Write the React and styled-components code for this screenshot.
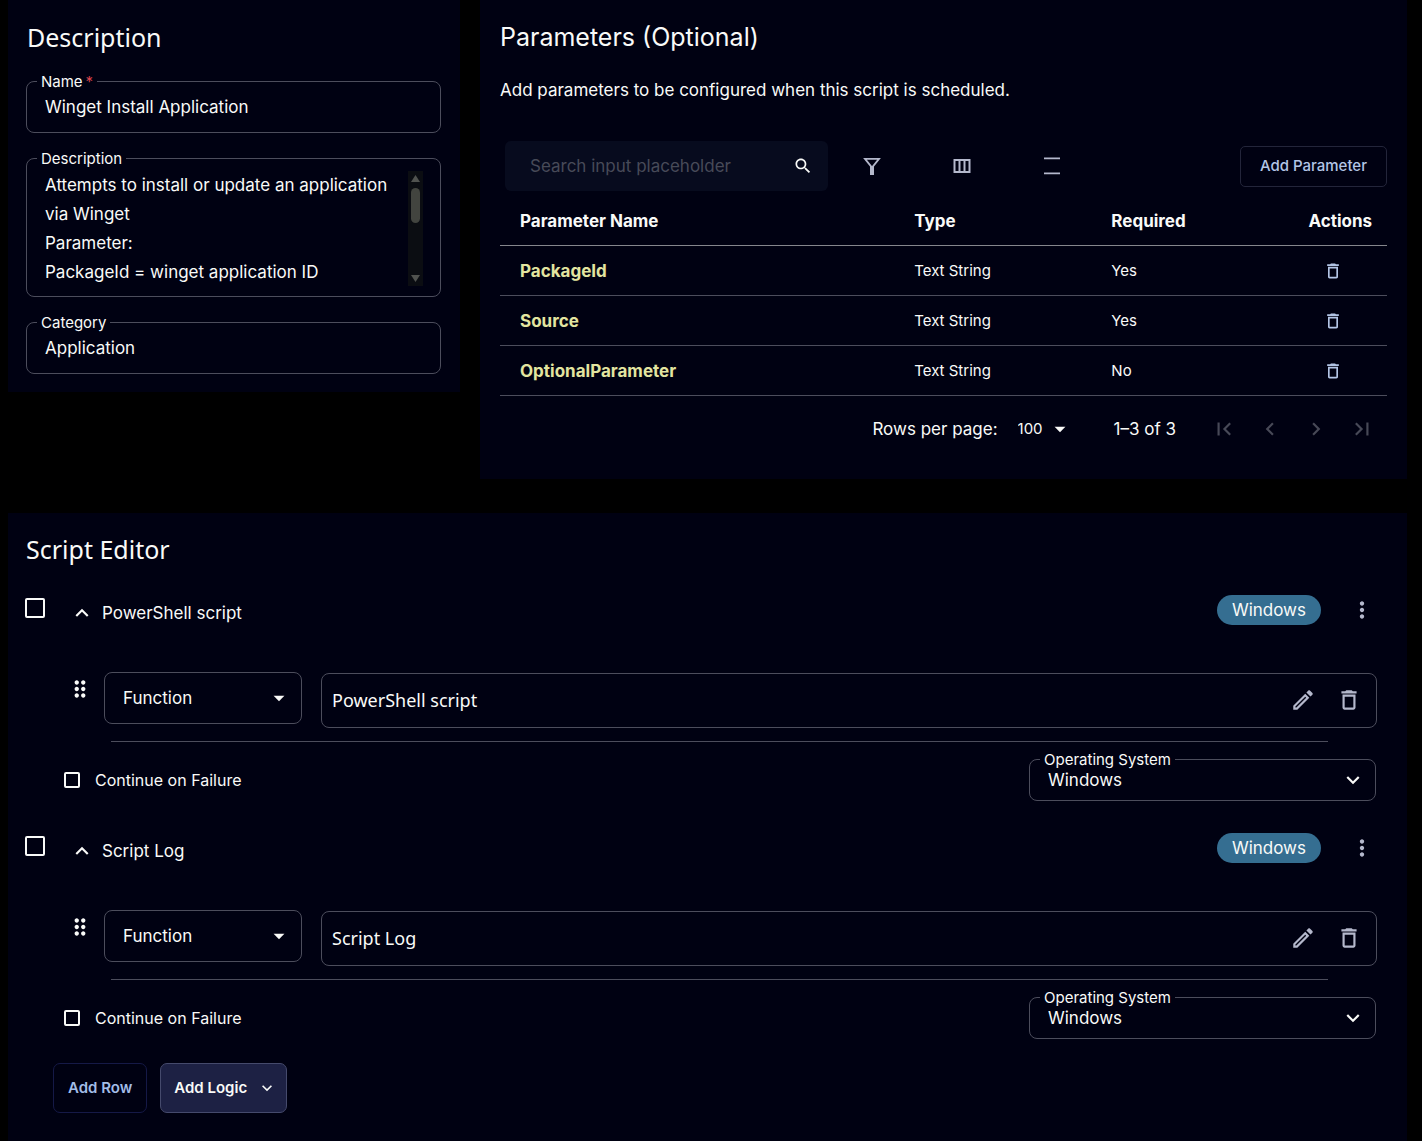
import React from "react";
import styled, { createGlobalStyle } from "styled-components";

const color = {
  page: "#000000",
  panel: "#000112",
  outline: "#4c4d5c",
  faint: "#23253a",
  text: "#f9faf8",
  accent: "#b3c5e6",
  icon: "#b4b8cc",
};

const GlobalStyle = createGlobalStyle`
  * { box-sizing: border-box; }
  body {
    margin: 0;
    background: ${color.page};
    color: ${color.text};
    font-family: Inter, "Liberation Sans", sans-serif;
    font-size: 17px;
    line-height: 24px;
  }
  button, input, select, textarea { font: inherit; color: inherit; margin: 0; }
`;

const Page = styled.main`
  display: grid;
  gap: 34px;
  padding: 0 15px 0 8px;
`;

const TopRow = styled.div`
  display: grid;
  grid-template-columns: 452px minmax(0, 1fr);
  align-items: start;
  gap: 20px;
`;

const Panel = styled.section`
  background: ${color.panel};
  padding: ${(p) => p.$pad};
`;

const Heading = styled.h2`
  margin: 0;
  padding-left: ${(p) => (p.$noto ? "1px" : "0")};
  font-family: ${(p) => (p.$noto ? '"Noto Sans", sans-serif' : "inherit")};
  font-size: 25px;
  line-height: 34px;
  font-weight: 400;
`;

const FieldStack = styled.div`
  display: grid;
  gap: 25px;
  margin-top: 27px;
`;

const Field = styled.div`
  position: relative;
  display: flex;
  height: ${(p) => p.$height || "52px"};
  border: 1px solid ${color.outline};
  border-radius: 8px;
`;

const FieldLabel = styled.label`
  position: absolute;
  top: -10px;
  left: 10px;
  padding: 0 4px;
  background: ${color.panel};
  font-size: 15px;
  line-height: 20px;
`;

const Star = styled.span`
  margin-left: 3px;
  color: #d8434b;
`;

const FieldInput = styled.input`
  width: 100%;
  padding: 0 18px;
  border: 0;
  outline: 0;
  background: none;
`;

const FieldArea = styled.textarea`
  flex: 1;
  min-width: 0;
  height: 116px;
  margin-top: 12px;
  padding: 0 0 0 18px;
  border: 0;
  outline: 0;
  resize: none;
  overflow: hidden;
  background: none;
  line-height: 29px;
`;

const ScrollTrack = styled.div`
  display: flex;
  flex-direction: column;
  align-items: center;
  justify-content: space-between;
  width: 15px;
  height: 115px;
  margin: 12px 17px 0 8px;
  padding: 4px 0;
  background: #0b0d12;
`;

const ScrollThumb = styled.div`
  width: 9px;
  height: 35px;
  margin: 0 0 46px;
  border-radius: 5px;
  background: #42443f;
`;

const Lead = styled.p`
  margin: 24px 0 0;
`;

const Toolbar = styled.div`
  display: flex;
  align-items: center;
  margin: 39px 0 0 5px;
`;

const SearchBox = styled.div`
  display: flex;
  align-items: center;
  width: 323px;
  height: 50px;
  padding: 0 15px 0 25px;
  border-radius: 6px;
  background: #070b1e;
`;

const SearchInput = styled.input`
  flex: 1;
  min-width: 0;
  padding: 0;
  border: 0;
  outline: 0;
  background: none;
  &::placeholder { color: #474a58; opacity: 1; }
`;

const ToolGroup = styled.div`
  display: flex;
  gap: 50px;
  margin-left: 24px;
`;

const IconButton = styled.button`
  display: inline-flex;
  align-items: center;
  justify-content: center;
  width: ${(p) => p.$size || "40px"};
  height: 40px;
  padding: 0;
  border: 0;
  background: none;
  color: ${(p) => p.$tone || color.icon};
`;

const AddParameter = styled.button`
  height: 41px;
  margin-left: auto;
  padding: 0 19px;
  border: 1px solid ${color.faint};
  border-radius: 5px;
  background: none;
  color: ${color.accent};
  font-size: 15px;
  font-weight: 500;
`;

const Table = styled.table`
  width: 100%;
  margin-top: 4px;
  border-collapse: collapse;
  table-layout: fixed;
`;

const Col = styled.col`
  width: calc(100% * ${(p) => p.$share} / 9);
`;

const HeadCell = styled.th`
  height: 50px;
  padding: 2px 0 0 20px;
  border-bottom: 1px solid #85868c;
  text-align: left;
  font-size: 17px;
  font-weight: 700;
`;

const Cell = styled.td`
  height: 50px;
  padding: 2px 0 0 20px;
  border-bottom: 1px solid ${color.outline};
  font-size: ${(p) => (p.$name ? "17px" : "15px")};
  font-weight: ${(p) => (p.$name ? 700 : 400)};
  color: ${(p) => (p.$name ? "#e3e5a0" : "inherit")};
`;

const Pager = styled.div`
  display: flex;
  align-items: center;
  justify-content: flex-end;
  height: 40px;
  margin-top: 13px;
`;

const PageSize = styled.div`
  position: relative;
  margin: 0 41px 0 20px;
  font-size: 15px;
`;

const PlainSelect = styled.select`
  appearance: none;
  width: ${(p) => p.$width || "100%"};
  height: 100%;
  padding: ${(p) => p.$pad || "0 18px"};
  border: 0;
  outline: 0;
  border-radius: 8px;
  background: none;
`;

const SelectIcon = styled.span`
  position: absolute;
  top: 0;
  bottom: 0;
  right: ${(p) => p.$right || "0"};
  display: flex;
  align-items: center;
  pointer-events: none;
`;

const PagerButtons = styled.div`
  display: flex;
  gap: 6px;
  margin-left: 28px;
  margin-right: 5px;
`;

const Blocks = styled.div`
  margin-top: 29px;
`;

const Block = styled.article`
  display: grid;
  grid-template-columns: 36px minmax(0, 1fr);
  height: 238px;
`;

const Select = styled.div`
  padding-top: 3px;
`;

const Checkbox = styled.input`
  appearance: none;
  display: block;
  flex: none;
  width: ${(p) => p.$size};
  height: ${(p) => p.$size};
  border: 2px solid ${color.text};
  border-radius: 2px;
  background: none;
  &:checked { background: ${color.text}; }
`;

const BlockHeader = styled.header`
  display: flex;
  align-items: center;
  height: 30px;
  padding-right: 5px;
`;

const Toggle = styled.button`
  display: flex;
  align-items: center;
  gap: 7px;
  padding: 6px 0 0 8px;
  border: 0;
  background: none;
`;

const Chip = styled.span`
  margin: 0 21px 0 auto;
  padding: 0 15px;
  border-radius: 15px;
  background: #356e91;
  line-height: 30px;
`;

const FunctionRow = styled.div`
  display: flex;
  align-items: flex-start;
  margin-top: 47px;
  padding-right: 10px;
`;

const Handle = styled.button`
  display: flex;
  justify-content: center;
  width: 26px;
  margin: 4px 11px 0 6px;
  padding: 0;
  border: 0;
  background: none;
`;

const FunctionSelect = styled(Field)`
  width: 198px;
`;

const ScriptBox = styled.div`
  flex: 1;
  display: flex;
  align-items: center;
  height: 55px;
  margin: 1px 0 0 19px;
  padding: 0 4px 0 10px;
  border: 1px solid ${color.outline};
  border-radius: 8px;
`;

const ScriptInput = styled.input`
  flex: 1;
  min-width: 0;
  padding: 0;
  border: 0;
  outline: 0;
  background: none;
  font-family: "Noto Sans", sans-serif;
  font-size: 18px;
`;

const Rule = styled.hr`
  margin: 13px 59px 0 50px;
  border: 0;
  border-top: 1px solid ${color.outline};
`;

const OptionsRow = styled.div`
  display: flex;
  align-items: center;
  justify-content: space-between;
  margin-top: 17px;
  padding: 0 11px 0 3px;
`;

const CheckLabel = styled.label`
  display: flex;
  align-items: center;
  gap: 15px;
  font-size: 16px;
`;

const SystemField = styled(Field)`
  width: 347px;
`;

const Actions = styled.div`
  display: flex;
  gap: 13px;
  padding-left: 28px;
  margin-top: -8px;
`;

const ActionButton = styled.button`
  display: flex;
  align-items: center;
  gap: 10px;
  height: 50px;
  padding: ${(p) => (p.$filled ? "0 9px 0 13px" : "0 14px")};
  border: 1px solid ${(p) => (p.$filled ? "#454a6c" : "#151947")};
  border-radius: 7px;
  background: ${(p) => (p.$filled ? "#1d2144" : "none")};
  color: ${(p) => (p.$filled ? color.text : "#a3bde8")};
  font-size: 15px;
  font-weight: 600;
`;

const Icon = ({ d, size = 26, children }) => (
  <svg width={size} height={size} viewBox="0 0 24 24" fill="currentColor" aria-hidden="true">
    {d && <path d={d} />}
    {children}
  </svg>
);

const paths = {
  search:
    "M15.5 14h-.79l-.28-.27C15.41 12.59 16 11.11 16 9.5 16 5.91 13.09 3 9.5 3S3 5.91 3 9.5 5.91 16 9.5 16c1.61 0 3.09-.59 4.23-1.57l.27.28v.79l5 4.99L20.49 19l-4.99-5zm-6 0C7.01 14 5 11.99 5 9.5S7.01 5 9.5 5 14 7.01 14 9.5 11.99 14 9.5 14z",
  trash:
    "M6 19c0 1.1.9 2 2 2h8c1.1 0 2-.9 2-2V7H6v12zM8 9h8v10H8V9zm7.5-5l-1-1h-5l-1 1H5v2h14V4z",
  edit:
    "M14.06 9.02l.92.92L5.92 19H5v-.92l9.06-9.06M17.66 3c-.25 0-.51.1-.7.29l-1.83 1.83 3.75 3.75 1.83-1.83c.39-.39.39-1.02 0-1.41l-2.34-2.34c-.2-.2-.45-.29-.71-.29zm-3.6 3.19L3 17.25V21h3.75L17.81 9.94l-3.75-3.75z",
  caret: "M7 10l5 5 5-5z",
  up: "M12 8l-6 6 1.41 1.41L12 10.83l4.59 4.58L18 14z",
  down: "M16.59 8.59L12 13.17 7.41 8.59 6 10l6 6 6-6z",
  left: "M15.41 7.41L14 6l-6 6 6 6 1.41-1.41L10.83 12z",
  right: "M10 6L8.59 7.41 13.17 12l-4.58 4.59L10 18l6-6z",
  first: "M18.41 16.59L13.82 12l4.59-4.59L17 6l-6 6 6 6zM6 6h2v12H6z",
  last: "M5.59 7.41L10.18 12l-4.59 4.59L7 18l6-6-6-6zM16 6h2v12h-2z",
  more: "M12 8c1.1 0 2-.9 2-2s-.9-2-2-2-2 .9-2 2 .9 2 2 2zm0 2c-1.1 0-2 .9-2 2s.9 2 2 2 2-.9 2-2-.9-2-2-2zm0 6c-1.1 0-2 .9-2 2s.9 2 2 2 2-.9 2-2-.9-2-2-2z",
  drag: "M11 18c0 1.1-.9 2-2 2s-2-.9-2-2 .9-2 2-2 2 .9 2 2zm-2-8c-1.1 0-2 .9-2 2s.9 2 2 2 2-.9 2-2-.9-2-2-2zm0-6c-1.1 0-2 .9-2 2s.9 2 2 2 2-.9 2-2-.9-2-2-2zm6 4c1.1 0 2-.9 2-2s-.9-2-2-2-2 .9-2 2 .9 2 2 2zm0 2c-1.1 0-2 .9-2 2s.9 2 2 2 2-.9 2-2-.9-2-2-2zm0 6c-1.1 0-2 .9-2 2s.9 2 2 2 2-.9 2-2-.9-2-2-2z",
};

const FilterIcon = () => (
  <Icon size={24}>
    <path d="M5 4.9h14l-7 8.6z" fill="none" stroke="currentColor" strokeWidth="1.8" />
    <path d="M10 12h4v9h-4z" />
  </Icon>
);

const ColumnsIcon = () => (
  <Icon size={24}>
    <path d="M4.5 6h15v12h-15zM9.5 6v12M14.5 6v12" fill="none" stroke="currentColor" strokeWidth="2" />
  </Icon>
);

const DensityIcon = () => (
  <Icon size={24}>
    <path d="M4 3.5h16v1.7H4zM4 18.5h16v1.7H4z" />
  </Icon>
);

const parameters = [
  { name: "PackageId", type: "Text String", required: "Yes" },
  { name: "Source", type: "Text String", required: "Yes" },
  { name: "OptionalParameter", type: "Text String", required: "No" },
];

const scripts = ["PowerShell script", "Script Log"];

const descriptionText =
  "Attempts to install or update an application via Winget\nParameter:\nPackageId = winget application ID";

function DescriptionPanel() {
  return (
    <Panel $pad="20px 19px 18px 18px">
      <Heading $noto>Description</Heading>
      <FieldStack>
        <Field>
          <FieldLabel htmlFor="name">
            Name<Star>*</Star>
          </FieldLabel>
          <FieldInput id="name" defaultValue="Winget Install Application" />
        </Field>
        <Field $height="139px">
          <FieldLabel htmlFor="description">Description</FieldLabel>
          <FieldArea id="description" defaultValue={descriptionText} />
          <ScrollTrack aria-hidden="true">
            <svg width="9" height="7" viewBox="0 0 9 7"><path d="M4.5 0L9 7H0z" fill="#50524f" /></svg>
            <ScrollThumb />
            <svg width="9" height="7" viewBox="0 0 9 7"><path d="M0 0h9L4.5 7z" fill="#50524f" /></svg>
          </ScrollTrack>
        </Field>
        <Field>
          <FieldLabel htmlFor="category">Category</FieldLabel>
          <FieldInput id="category" defaultValue="Application" />
        </Field>
      </FieldStack>
    </Panel>
  );
}

function ParametersPanel() {
  return (
    <Panel $pad="20px 20px 30px">
      <Heading>Parameters (Optional)</Heading>
      <Lead>Add parameters to be configured when this script is scheduled.</Lead>
      <Toolbar>
        <SearchBox>
          <SearchInput aria-label="Search parameters" placeholder="Search input placeholder" />
          <Icon d={paths.search} size={20} />
        </SearchBox>
        <ToolGroup>
          <IconButton aria-label="Filter"><FilterIcon /></IconButton>
          <IconButton aria-label="Columns"><ColumnsIcon /></IconButton>
          <IconButton aria-label="Density"><DensityIcon /></IconButton>
        </ToolGroup>
        <AddParameter>Add Parameter</AddParameter>
      </Toolbar>
      <Table>
        <colgroup>
          <Col $share={4} />
          <Col $share={2} />
          <Col $share={2} />
          <Col $share={1} />
        </colgroup>
        <thead>
          <tr>
            <HeadCell>Parameter Name</HeadCell>
            <HeadCell>Type</HeadCell>
            <HeadCell>Required</HeadCell>
            <HeadCell>Actions</HeadCell>
          </tr>
        </thead>
        <tbody>
          {parameters.map((row) => (
            <tr key={row.name}>
              <Cell $name>{row.name}</Cell>
              <Cell>{row.type}</Cell>
              <Cell>{row.required}</Cell>
              <Cell>
                <IconButton $size="50px" $tone={color.accent} aria-label={`Delete ${row.name}`}>
                  <Icon d={paths.trash} size={20} />
                </IconButton>
              </Cell>
            </tr>
          ))}
        </tbody>
      </Table>
      <Pager>
        <label htmlFor="page-size">Rows per page:</label>
        <PageSize>
          <PlainSelect id="page-size" $width="55px" $pad="0">
            <option>100</option>
          </PlainSelect>
          <SelectIcon><Icon d={paths.caret} /></SelectIcon>
        </PageSize>
        <span>1–3 of 3</span>
        <PagerButtons>
          {["first", "left", "right", "last"].map((name) => (
            <IconButton key={name} $tone="#474957" aria-label={`${name} page`}>
              <Icon d={paths[name]} />
            </IconButton>
          ))}
        </PagerButtons>
      </Pager>
    </Panel>
  );
}

function ScriptBlock({ name, id }) {
  return (
    <Block>
      <Select>
        <Checkbox type="checkbox" $size="20px" aria-label={`Select ${name}`} />
      </Select>
      <div>
        <BlockHeader>
          <Toggle>
            <Icon d={paths.up} />
            {name}
          </Toggle>
          <Chip>Windows</Chip>
          <IconButton aria-label="More actions"><Icon d={paths.more} /></IconButton>
        </BlockHeader>
        <FunctionRow>
          <Handle aria-label="Reorder"><Icon d={paths.drag} /></Handle>
          <FunctionSelect>
            <PlainSelect aria-label="Step type"><option>Function</option></PlainSelect>
            <SelectIcon $right="9px"><Icon d={paths.caret} /></SelectIcon>
          </FunctionSelect>
          <ScriptBox>
            <ScriptInput aria-label="Script name" defaultValue={name} />
            <IconButton $size="46px" aria-label="Edit"><Icon d={paths.edit} /></IconButton>
            <IconButton $size="46px" aria-label="Delete"><Icon d={paths.trash} /></IconButton>
          </ScriptBox>
        </FunctionRow>
        <Rule />
        <OptionsRow>
          <CheckLabel>
            <Checkbox type="checkbox" $size="16px" />
            Continue on Failure
          </CheckLabel>
          <SystemField $height="42px">
            <FieldLabel htmlFor={id}>Operating System</FieldLabel>
            <PlainSelect id={id}><option>Windows</option></PlainSelect>
            <SelectIcon $right="9px"><Icon d={paths.down} /></SelectIcon>
          </SystemField>
        </OptionsRow>
      </div>
    </Block>
  );
}

export default function App() {
  return (
    <>
      <GlobalStyle />
      <Page>
        <TopRow>
          <DescriptionPanel />
          <ParametersPanel />
        </TopRow>
        <Panel $pad="19px 20px 28px 17px">
          <Heading $noto>Script Editor</Heading>
          <Blocks>
            {scripts.map((name, index) => (
              <ScriptBlock key={name} name={name} id={`system-${index}`} />
            ))}
          </Blocks>
          <Actions>
            <ActionButton>Add Row</ActionButton>
            <ActionButton $filled>
              Add Logic
              <Icon d={paths.down} size={20} />
            </ActionButton>
          </Actions>
        </Panel>
      </Page>
    </>
  );
}
